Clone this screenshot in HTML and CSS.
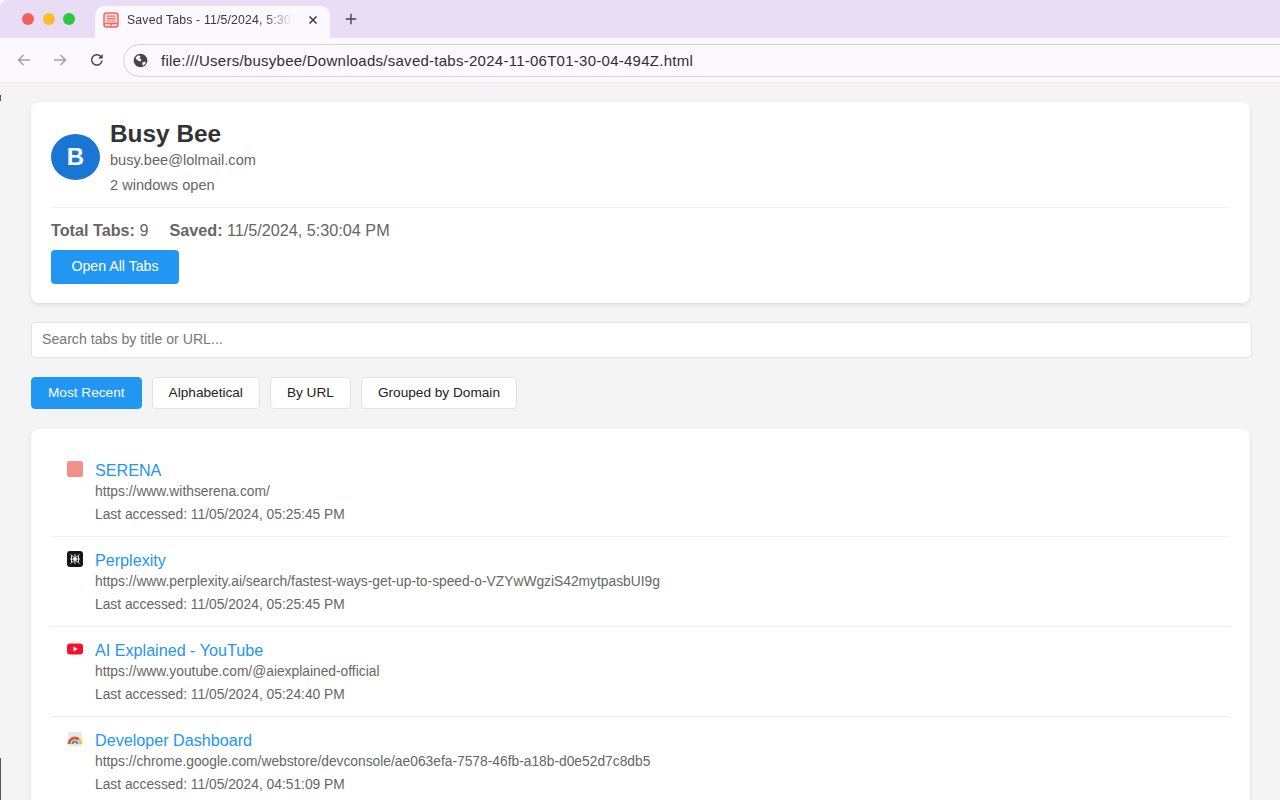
FILE: index.html
```html
<!DOCTYPE html>
<html lang="en">
<head>
<meta charset="utf-8">
<title>Saved Tabs</title>
<link rel="stylesheet" href="styles.css">
</head>
<body>
<div class="edge edge-mid"></div>
<div class="edge edge-bottom"></div>
<header class="browser">
  <div class="tabstrip">
    <div class="lights"><span class="light red"></span><span class="light yellow"></span><span class="light green"></span></div>
    <div class="tab">
      <svg class="tab-icon" width="16" height="16" viewBox="0 0 16 16"><rect x="1" y="1" width="14" height="14" rx="2.5" fill="#fde4e0" stroke="#f0655c" stroke-width="1.5"/><path d="M3.5 4.2h9M3.5 6.6h9M3.5 9h9" stroke="#f0655c" stroke-width="1.2"/><path d="M2 11.5h12M8 11.5v3" stroke="#f0655c" stroke-width="1.3"/></svg>
      <span class="tab-title">Saved Tabs - 11/5/2024, 5:30:04 PM</span>
      <svg class="tab-close" width="10" height="10" viewBox="0 0 10 10"><path d="M1.5 1.5l7 7M8.500 1.500l-7 7" stroke="#3c3a40" stroke-width="1.5"/></svg>
    </div>
    <svg class="new-tab" width="12" height="12" viewBox="0 0 12 12"><path d="M6 .8v10.400M.8 6h10.400" stroke="#46434c" stroke-width="1.400"/></svg>
  </div>
  <div class="toolbar">
    <svg class="nav nav-back" width="16" height="16" viewBox="0 0 16 16"><path d="M14 8H2.500M7.500 3l-5 5 5 5" fill="none" stroke="#a3a1a8" stroke-width="1.500"/></svg>
    <svg class="nav nav-forward" width="16" height="16" viewBox="0 0 16 16"><path d="M2 8h11.500M8.500 3l5 5-5 5" fill="none" stroke="#a3a1a8" stroke-width="1.500"/></svg>
    <svg class="nav nav-reload" width="16" height="16" viewBox="0 0 16 16"><path d="M13 8.500A5.200 5.200 0 1 1 11.600 4.300L13 5.800" fill="none" stroke="#47454b" stroke-width="1.500"/><path d="M13.600 2v4.500H9.100z" fill="#47454b"/></svg>
    <div class="omnibox">
      <svg class="globe" width="15" height="15" viewBox="0 0 16 16"><circle cx="8" cy="8" r="7.300" fill="#47454b"/><path d="M3 4.500l3-2 2 1-1 2 2 1.500-1 2-2-.5-3-2.500zM10 10l3-1 .5 2-2.500 2.500-1-1.500z" fill="#fdf7fe"/></svg>
      <span class="url">file:///Users/busybee/Downloads/saved-tabs-2024-11-06T01-30-04-494Z.html</span>
    </div>
  </div>
</header>

<main class="page">
  <section class="card profile">
    <div class="user">
      <div class="avatar">B</div>
      <div class="user-info">
        <h1 class="user-name">Busy Bee</h1>
        <p class="user-line">busy.bee@lolmail.com</p>
        <p class="user-line">2 windows open</p>
      </div>
    </div>
    <div class="stats">
      <span class="stat"><b>Total Tabs:</b> 9</span>
      <span class="stat"><b>Saved:</b> 11/5/2024, 5:30:04 PM</span>
    </div>
    <button class="btn btn-open">Open All Tabs</button>
  </section>

  <input class="search" type="text" placeholder="Search tabs by title or URL...">

  <nav class="sorts">
    <button class="sort active">Most Recent</button>
    <button class="sort">Alphabetical</button>
    <button class="sort">By URL</button>
    <button class="sort">Grouped by Domain</button>
  </nav>

  <section class="card list">
    <article class="item">
      <svg class="favicon" width="16" height="16" viewBox="0 0 16 16"><rect width="16" height="16" rx="2.500" fill="#f4908a"/></svg>
      <div class="item-body">
        <a class="item-title">SERENA</a>
        <div class="item-url">https://www.withserena.com/</div>
        <div class="item-time">Last accessed: 11/05/2024, 05:25:45 PM</div>
      </div>
    </article>
    <article class="item">
      <svg class="favicon" width="16" height="16" viewBox="0 0 16 16"><rect width="16" height="16" rx="3" fill="#14161a"/><path d="M8 3v10M3.500 3.500L8 7l4.500-3.500M3.500 12.500L8 9l4.500 3.500M3 8h10M4.500 5v6M11.500 5v6" fill="none" stroke="#dfe6e6" stroke-width="1"/><circle cx="8" cy="8" r="1.800" fill="#f2f5f5"/></svg>
      <div class="item-body">
        <a class="item-title">Perplexity</a>
        <div class="item-url">https://www.perplexity.ai/search/fastest-ways-get-up-to-speed-o-VZYwWgziS42mytpasbUI9g</div>
        <div class="item-time">Last accessed: 11/05/2024, 05:25:45 PM</div>
      </div>
    </article>
    <article class="item">
      <svg class="favicon" width="16" height="16" viewBox="0 0 16 16"><rect y="2.500" width="16" height="11" rx="3" fill="#f6102f"/><path d="M6.500 5.500v5L10.700 8z" fill="#fff"/></svg>
      <div class="item-body">
        <a class="item-title">AI Explained - YouTube</a>
        <div class="item-url">https://www.youtube.com/@aiexplained-official</div>
        <div class="item-time">Last accessed: 11/05/2024, 05:24:40 PM</div>
      </div>
    </article>
    <article class="item">
      <svg class="favicon" width="16" height="16" viewBox="0 0 16 16"><rect x="1" y="1" width="14" height="14" fill="#e8e8e8"/><path d="M2 13a6 6 0 0 1 6-6" fill="none" stroke="#e0574a" stroke-width="3"/><path d="M8 7a6 6 0 0 1 3.800 1.400" fill="none" stroke="#e0574a" stroke-width="3"/><path d="M11.800 8.400A6 6 0 0 1 14 13" fill="none" stroke="#f3c23c" stroke-width="3"/><path d="M5.500 13a2.500 2.500 0 0 1 2.500-2.500" fill="none" stroke="#3aa757" stroke-width="2"/><path d="M8 10.500a2.500 2.500 0 0 1 2.500 2.500" fill="none" stroke="#4a86e8" stroke-width="2"/></svg>
      <div class="item-body">
        <a class="item-title">Developer Dashboard</a>
        <div class="item-url">https://chrome.google.com/webstore/devconsole/ae063efa-7578-46fb-a18b-d0e52d7c8db5</div>
        <div class="item-time">Last accessed: 11/05/2024, 04:51:09 PM</div>
      </div>
    </article>
  </section>
</main>
</body>
</html>
```
FILE: styles.css
```css
* { box-sizing: border-box; }
html, body { height: 100%; }
body {
  margin: 0;
  height: 800px;
  overflow: hidden;
  background: #f4f4f4;
  font-family: "Liberation Sans", Arial, sans-serif;
  color: #333;
  position: relative;
}
.edge {
  position: absolute;
  left: 0;
  width: 1px;
  background: #555;
}
.edge-mid { top: 95px; height: 6px; }
.edge-bottom { top: 758px; height: 42px; }
.browser { height: 83px; display: flex; flex-direction: column; }
.tabstrip {
  height: 38px;
  background: #e9ddf5;
  display: flex;
  align-items: flex-end;
  border-top-left-radius: 8px;
}
.lights { display: flex; gap: 8.500px; padding: 0 0 13px 22px; width: 95px; }
.light { width: 12px; height: 12px; border-radius: 50%; }
.red { background: #f4605a; }
.yellow { background: #fbbc2e; }
.green { background: #2ac840; }
.tab {
  width: 235px;
  height: 32px;
  background: #fdf7fe;
  border-radius: 9px 9px 0 0;
  display: flex;
  align-items: center;
  padding: 0 12px 5px 8px;
  position: relative;
}
.tab-icon { flex: none; }
.tab-title {
  margin-left: 8px;
  width: 170px;
  flex: none;
  font-size: 12.300px;
  letter-spacing: .15px;
  color: #3c3a40;
  white-space: nowrap;
  overflow: hidden;
  -webkit-mask-image: linear-gradient(90deg, #000 80%, transparent 98%);
  mask-image: linear-gradient(90deg, #000 80%, transparent 98%);
}
.tab-close { margin-left: 11px; flex: none; }
.new-tab { margin: 0 0 13px 15px; }
.toolbar {
  height: 45px;
  background: #fdf7fe;
  border-bottom: 1px solid #ece6ee;
  display: flex;
  align-items: center;
  padding-left: 16px;
}
.nav { flex: none; }
.nav-forward { margin-left: 20px; }
.nav-reload { margin-left: 21px; }
.omnibox {
  margin-left: 18px;
  flex: 1;
  margin-right: -40px;
  height: 33px;
  border: 1px solid #d5d0d8;
  border-radius: 17px;
  display: flex;
  align-items: center;
  padding-left: 9px;
}
.globe { flex: none; }
.url { margin-left: 13px; font-size: 15px; letter-spacing: .26px; color: #302e34; white-space: nowrap; }

.page { padding: 19px 28px 0 31px; }
.card {
  background: #fff;
  border-radius: 8px;
  box-shadow: 0 2px 4px rgba(0, 0, 0, .1);
  width: 1219px;
}
.profile { height: 201px; padding: 20px; }
.user {
  height: 86px;
  display: flex;
  align-items: flex-start;
  border-bottom: 1px solid #eee;
}
.avatar {
  width: 49px;
  height: 46px;
  border-radius: 50%;
  background: #1976d2;
  color: #fff;
  font-size: 24px;
  font-weight: 700;
  display: flex;
  align-items: center;
  justify-content: center;
  flex: none;
  margin-top: 12px;
}
.user-info { margin-left: 10px; }
.user-name { margin: 0 0 3px; font-size: 24.400px; line-height: 23px; font-weight: 700; color: #333; }
.user-line { margin: 0; font-size: 14.600px; line-height: 25px; color: #666; }
.stats { display: flex; gap: 21px; margin-top: 13px; font-size: 16.200px; line-height: 18px; color: #666; }
.btn {
  display: block;
  margin-top: 11px;
  width: 128px;
  height: 34px;
  border: 0;
  border-radius: 4px;
  background: #2196f3;
  color: #fff;
  font: 14.150px "Liberation Sans", Arial, sans-serif;
  padding: 0 0 2px;
}
.search {
  display: block;
  margin-top: 19px;
  width: 1221px;
  height: 36px;
  border: 1px solid #e4e4e4;
  border-radius: 4px;
  background: #fff;
  padding: 0 10px 2px;
  font: 14.150px "Liberation Sans", Arial, sans-serif;
  outline: none;
}
.search::placeholder { color: #777; opacity: 1; }
.sorts { display: flex; gap: 10px; margin-top: 19px; }
.sort {
  height: 32px;
  padding: 0 16px 2px;
  background: #fff;
  border: 1px solid #e2e2e2;
  border-radius: 4px;
  color: #222;
  font: 13.650px "Liberation Sans", Arial, sans-serif;
}
.sort.active { background: #2196f3; border-color: #2196f3; color: #fff; }
.list { margin-top: 20px; padding: 18px 20px 0; height: 420px; }
.item {
  height: 90px;
  display: flex;
  align-items: flex-start;
  padding: 14px 16px 0;
  border-bottom: 1px solid #eee;
}
.favicon { flex: none; margin-right: 12px; }
.item-title { display: block; font-size: 16.150px; line-height: 18px; color: #2196f3; }
.item-url { margin-top: 5px; font-size: 13.800px; line-height: 16px; color: #666; white-space: nowrap; }
.item-time { margin-top: 7px; font-size: 13.800px; line-height: 16px; color: #666; }
```
